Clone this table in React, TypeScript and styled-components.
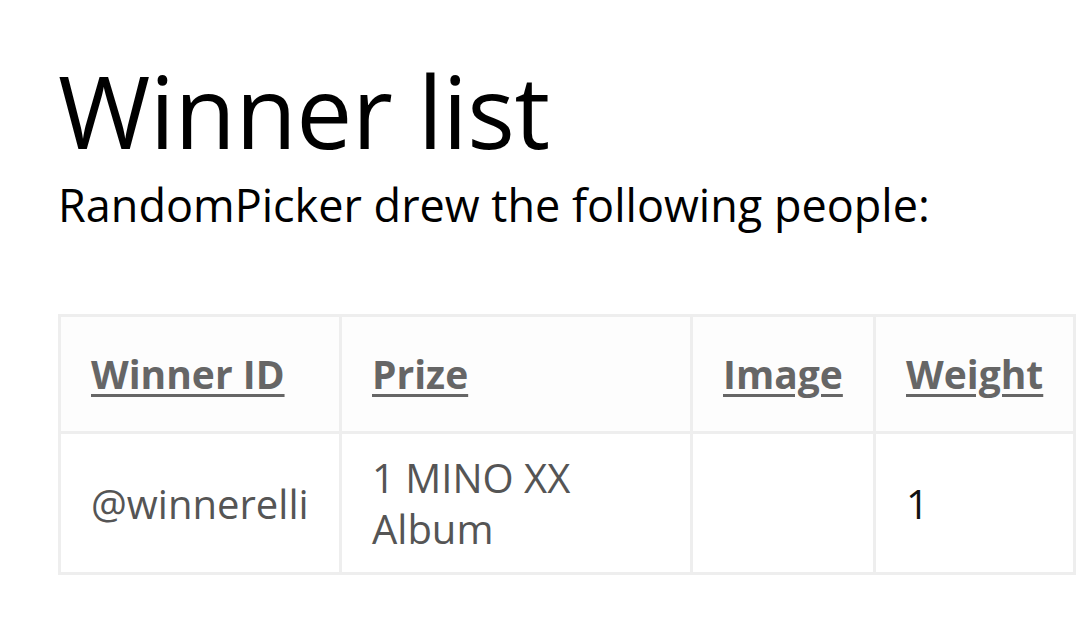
import React from "react";
import styled, { createGlobalStyle } from "styled-components";

const GlobalStyle = createGlobalStyle`
  html, body {
    margin: 0;
    padding: 0;
    background: #ffffff;
  }
  body {
    font-family: "Open Sans", "Noto Sans", Arial, sans-serif;
    overflow: hidden;
  }
`;

const Page = styled.main`
  padding: 45px 0 0 58px;
  width: 1078px;
  box-sizing: border-box;
`;

const Title = styled.h1`
  margin: 0;
  font-size: 100px;
  line-height: 130px;
  font-weight: 400;
  color: #000;
  letter-spacing: -0.5px;
`;

const Subtitle = styled.p`
  margin: 0;
  font-size: 45px;
  line-height: 60px;
  color: #000;
`;

const Table = styled.table`
  margin-top: 79px;
  border-collapse: collapse;
  table-layout: fixed;
  width: 1018px;
  border: 3px solid #eeeeee;
`;

const HeadCell = styled.th`
  border: 3px solid #eeeeee;
  padding: 30px 30px 30px;
  text-align: left;
  font-size: 39px;
  line-height: 54px;
  font-weight: 700;
  background: #fdfdfd;
`;

const SortLink = styled.a`
  color: #666666;
  text-decoration: underline;
  text-decoration-thickness: 3px;
  text-underline-offset: 5px;
`;

const Cell = styled.td<{ $dark?: boolean }>`
  border: 3px solid #eeeeee;
  padding: 18px 30px;
  font-size: 40px;
  line-height: 51px;
  vertical-align: middle;
  color: ${(p) => (p.$dark ? "#111111" : "#555555")};
`;

const rows = [
  { id: "@winnerelli", prize: "1 MINO XX Album", image: "", weight: "1" },
];

export default function App() {
  return (
    <>
      <GlobalStyle />
      <Page>
        <Title>Winner list</Title>
        <Subtitle>RandomPicker drew the following people:</Subtitle>
        <Table>
          <colgroup>
            <col style={{ width: 281 }} />
            <col style={{ width: 351 }} />
            <col style={{ width: 183 }} />
            <col style={{ width: 200 }} />
          </colgroup>
          <thead>
            <tr>
              <HeadCell><SortLink href="#">Winner ID</SortLink></HeadCell>
              <HeadCell><SortLink href="#">Prize</SortLink></HeadCell>
              <HeadCell><SortLink href="#">Image</SortLink></HeadCell>
              <HeadCell><SortLink href="#">Weight</SortLink></HeadCell>
            </tr>
          </thead>
          <tbody>
            {rows.map((r) => (
              <tr key={r.id}>
                <Cell>{r.id}</Cell>
                <Cell>{r.prize}</Cell>
                <Cell>{r.image}</Cell>
                <Cell $dark>{r.weight}</Cell>
              </tr>
            ))}
          </tbody>
        </Table>
      </Page>
    </>
  );
}
